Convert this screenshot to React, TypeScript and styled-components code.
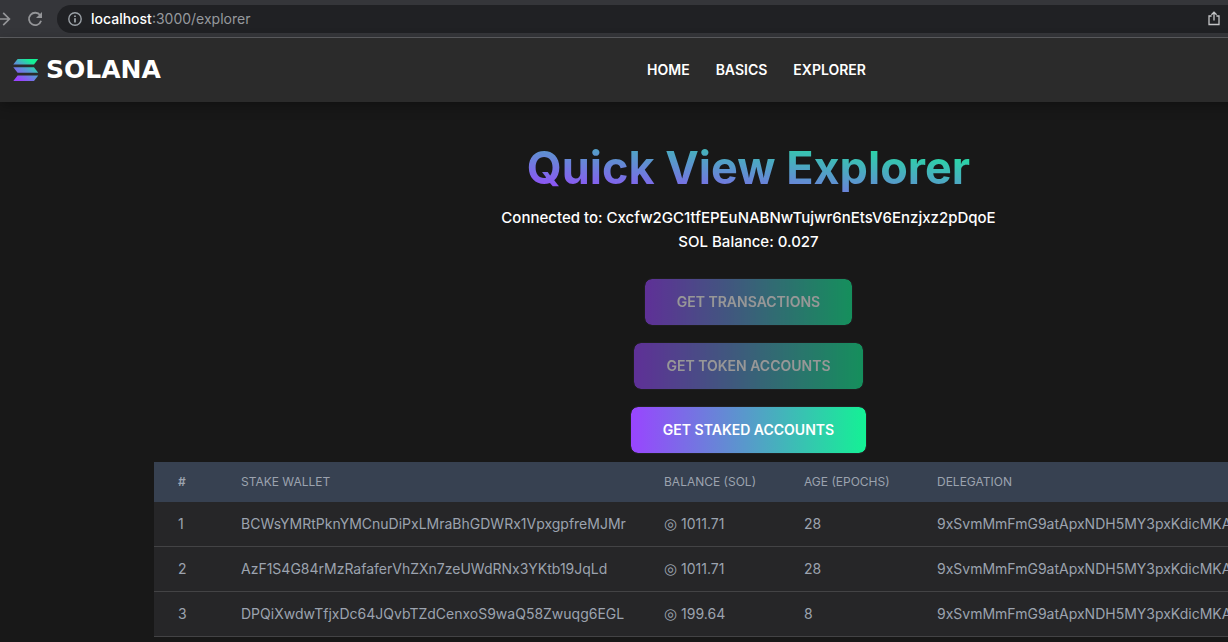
import React from "react";
import styled, { createGlobalStyle } from "styled-components";

const GlobalStyle = createGlobalStyle`
  *, *::before, *::after { box-sizing: border-box; }
  html, body, #root { height: 100%; }
  body {
    margin: 0;
    background: #181818;
    color: #fff;
    font-family: Inter, "Liberation Sans", sans-serif;
    font-size: 15px;
    line-height: 24px;
  }
`;

const Shell = styled.div`
  display: flex;
  flex-direction: column;
  height: 100%;
  overflow: hidden;
`;

const BrowserBar = styled.div`
  display: flex;
  flex: none;
  align-items: center;
  height: 38px;
  background: #35363a;
  border-bottom: 1px solid #5f6063;
`;

const ToolButton = styled.button`
  display: flex;
  align-items: center;
  justify-content: center;
  flex: none;
  width: ${(p: { $width: number }) => p.$width}px;
  height: 28px;
  padding: 0;
  border: 0;
  background: none;
  color: #949598;
`;

const ForwardButton = styled(ToolButton)`
  justify-content: flex-start;
`;

const AddressBox = styled.div`
  display: flex;
  flex: 1;
  align-items: center;
  height: 28px;
  margin-left: 14px;
  padding-left: 11px;
  border-radius: 14px 0 0 14px;
  background: #202124;
  color: #9aa0a6;
`;

const Address = styled.div`
  flex: 1;
  margin-left: 9px;
  font-size: 14px;
  line-height: 20px;
  color: #96999d;
`;

const Host = styled.span`
  color: #fff;
  font-weight: 500;
`;

/* The page is wider than the visible window and runs off its right edge. */
const Page = styled.div`
  flex: 1;
  margin-right: -269px;
`;

const Navbar = styled.nav`
  display: grid;
  grid-template-columns: 1fr auto 1fr;
  align-items: center;
  height: 64px;
  padding: 0 13px;
  background: #2b2b2b;
  box-shadow: 0 4px 12px rgba(0, 0, 0, 0.3);
`;

const Brand = styled.a`
  display: flex;
  align-items: center;
  gap: 7px;
  color: #fff;
  text-decoration: none;
  font-family: "DejaVu Sans", sans-serif;
  font-size: 25px;
  font-weight: 700;
`;

const NavLinks = styled.div`
  display: flex;
  gap: 26px;
  margin-left: 16px;
`;

const NavLink = styled.a`
  color: #fff;
  font-size: 14px;
  line-height: 20px;
  font-weight: 600;
  text-decoration: none;
`;

const Main = styled.main`
  display: flex;
  flex-direction: column;
  align-items: center;
  padding: 42px 154px 0;
`;

const Title = styled.h1`
  margin: 0 0 14px;
  font-size: 45px;
  line-height: 48px;
  font-weight: 700;
  color: transparent;
  background: linear-gradient(to top right, #9945ff, #14f195);
  background-clip: text;
  -webkit-background-clip: text;
`;

const Account = styled.p`
  margin: 0;
  text-align: center;
  font-weight: 500;
`;

const Actions = styled.div`
  display: flex;
  flex-direction: column;
  align-items: center;
  gap: 16px;
  padding: 24px 0 8px;
`;

const ActionButton = styled.button`
  height: 48px;
  padding: 0 32px;
  border: 1px solid #222224;
  border-radius: 8px;
  background: linear-gradient(to right, #9945ff, #14f195) padding-box;
  color: #fff;
  font-family: inherit;
  font-size: 14px;
  line-height: 20px;
  font-weight: 600;

  &:disabled {
    opacity: 0.55;
  }
`;

const Table = styled.table`
  width: 100%;
  table-layout: fixed;
  border-collapse: separate;
  border-spacing: 0;
  background: #262628;
  color: #9ca3af;
  text-align: left;
`;

const Column = styled.col`
  width: ${(p: { $width?: number }) => (p.$width ? `${p.$width}px` : "auto")};
`;

const HeadCell = styled.th`
  padding: 12px 24px;
  background: #374151;
  font-size: 12px;
  line-height: 16px;
  font-weight: 400;
  white-space: nowrap;
`;

const NumberHead = styled(HeadCell)`
  font-weight: 600;
`;

const Cell = styled.td`
  padding: 12px 24px;
  border-bottom: 1px solid #434345;
  font-size: 14px;
  line-height: 20px;
  white-space: nowrap;
`;

const Balance = styled.span`
  display: flex;
  align-items: center;
  gap: 4px;
`;

const CoinSign = styled.span`
  font-family: "DejaVu Sans", sans-serif;
  font-size: 15px;
`;

const ForwardIcon = () => (
  <svg width="12" height="16" viewBox="0 0 12 16" fill="none" stroke="currentColor" strokeWidth="1.7">
    <path d="M-4 8H9M3.2 1.8 9.4 8 3.2 14.2" />
  </svg>
);

const ReloadIcon = () => (
  <svg width="16" height="16" viewBox="0 0 16 16" fill="none">
    <path d="M13.2 4.3A6.2 6.2 0 1 0 14.1 9.8" stroke="currentColor" strokeWidth="1.8" />
    <path d="M15 1v6H9z" fill="currentColor" />
  </svg>
);

const InfoIcon = () => (
  <svg width="14" height="14" viewBox="0 0 14 14" fill="none">
    <circle cx="7" cy="7" r="6.2" stroke="currentColor" strokeWidth="1.4" />
    <path d="M7 6.2v4.2M7 3.4v1.5" stroke="currentColor" strokeWidth="1.8" />
  </svg>
);

const ShareIcon = () => (
  <svg width="12" height="15" viewBox="0 0 12 15" fill="none" stroke="#c4c5c7" strokeWidth="1.3">
    <path d="M3.6 5H1v8.5h10V5H8.4M6 9.5V1.6M3.4 3.8 6 1.2 8.6 3.8" />
  </svg>
);

const SolanaMark = () => (
  <svg width="26" height="22" viewBox="0 0 26 22">
    <defs>
      <linearGradient id="mark" gradientUnits="userSpaceOnUse" x1="5" y1="23" x2="21" y2="-1">
        <stop offset="0.1" stopColor="#9945ff" />
        <stop offset="0.5" stopColor="#5a94d4" />
        <stop offset="0.85" stopColor="#14f195" />
      </linearGradient>
    </defs>
    <g fill="url(#mark)">
      <path d="M4.6 0H25.2L21 5.4H.3z" />
      <path d="M.3 8.3H21l4.2 5.4H4.6z" />
      <path d="M4.6 16.6H25.2L21 22H.3z" />
    </g>
  </svg>
);

const actions = [
  { label: "GET TRANSACTIONS", disabled: true },
  { label: "GET TOKEN ACCOUNTS", disabled: true },
  { label: "GET STAKED ACCOUNTS", disabled: false },
];

const delegation = "9xSvmMmFmG9atApxNDH5MY3pxKdicMKAC";

const stakes = [
  { wallet: "BCWsYMRtPknYMCnuDiPxLMraBhGDWRx1VpxgpfreMJMr", balance: "1011.71", age: 28 },
  { wallet: "AzF1S4G84rMzRafaferVhZXn7zeUWdRNx3YKtb19JqLd", balance: "1011.71", age: 28 },
  { wallet: "DPQiXwdwTfjxDc64JQvbTZdCenxoS9waQ58Zwuqg6EGL", balance: "199.64", age: 8 },
];

export default function App() {
  return (
    <Shell>
      <GlobalStyle />
      <BrowserBar>
        <ForwardButton $width={27} aria-label="Forward"><ForwardIcon /></ForwardButton>
        <ToolButton $width={16} aria-label="Reload"><ReloadIcon /></ToolButton>
        <AddressBox>
          <InfoIcon />
          <Address><Host>localhost</Host>:3000/explorer</Address>
          <ToolButton $width={28} aria-label="Share"><ShareIcon /></ToolButton>
        </AddressBox>
      </BrowserBar>
      <Page>
        <Navbar>
          <Brand href="#"><SolanaMark />SOLANA</Brand>
          <NavLinks>
            <NavLink href="#home">HOME</NavLink>
            <NavLink href="#basics">BASICS</NavLink>
            <NavLink href="#explorer">EXPLORER</NavLink>
          </NavLinks>
        </Navbar>
        <Main>
          <Title>Quick View Explorer</Title>
          <Account>
            Connected to: Cxcfw2GC1tfEPEuNABNwTujwr6nEtsV6Enzjxz2pDqoE
            <br />
            SOL Balance: 0.027
          </Account>
          <Actions>
            {actions.map((a) => (
              <ActionButton key={a.label} disabled={a.disabled}>{a.label}</ActionButton>
            ))}
          </Actions>
          <Table>
            <colgroup>
              <Column $width={63} />
              <Column $width={423} />
              <Column $width={140} />
              <Column $width={133} />
              <Column />
            </colgroup>
            <thead>
              <tr>
                <NumberHead>#</NumberHead>
                <HeadCell>STAKE WALLET</HeadCell>
                <HeadCell>BALANCE (SOL)</HeadCell>
                <HeadCell>AGE (EPOCHS)</HeadCell>
                <HeadCell>DELEGATION</HeadCell>
              </tr>
            </thead>
            <tbody>
              {stakes.map((s, i) => (
                <tr key={s.wallet}>
                  <Cell>{i + 1}</Cell>
                  <Cell>{s.wallet}</Cell>
                  <Cell><Balance><CoinSign>◎</CoinSign>{s.balance}</Balance></Cell>
                  <Cell>{s.age}</Cell>
                  <Cell>{delegation}</Cell>
                </tr>
              ))}
            </tbody>
          </Table>
        </Main>
      </Page>
    </Shell>
  );
}
